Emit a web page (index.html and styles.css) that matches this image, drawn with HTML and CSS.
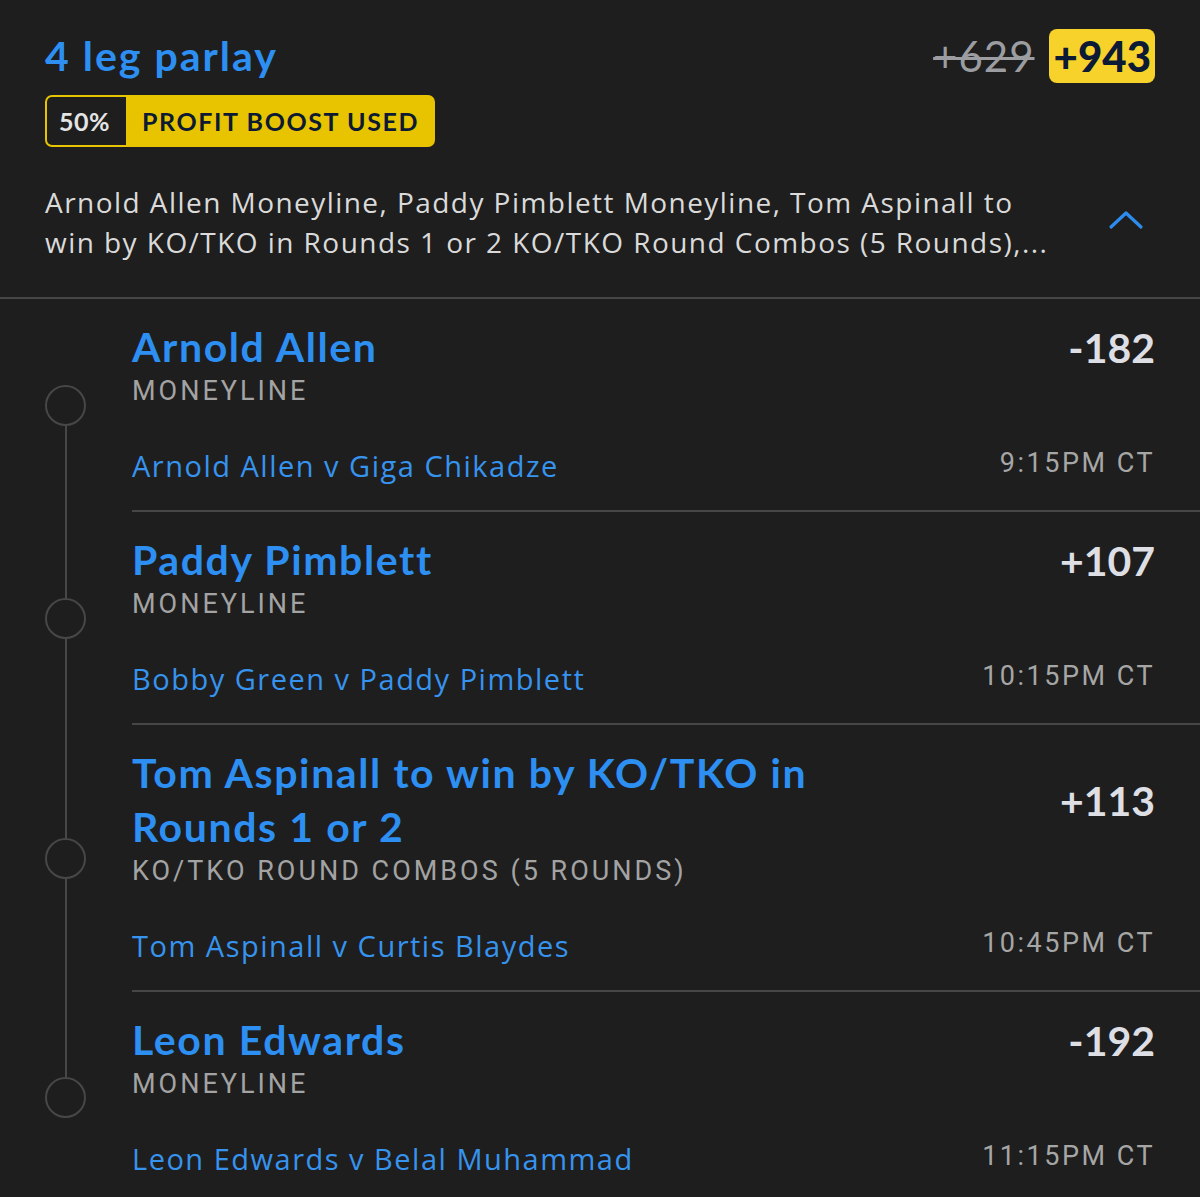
FILE: index.html
```html
<!DOCTYPE html>
<html lang="en">
<head>
<meta charset="utf-8">
<title>4 leg parlay</title>
<link rel="stylesheet" href="styles.css">
</head>
<body>
<div class="slip">
  <section class="header">
    <div class="title-row">
      <h1 class="parlay-title">4 leg parlay</h1>
      <div class="odds-group">
        <span class="odds-old">+629</span>
        <span class="odds-new">+943</span>
      </div>
    </div>
    <div class="boost">
      <span class="boost-pct">50%</span>
      <span class="boost-label">PROFIT BOOST USED</span>
    </div>
    <div class="desc-row">
      <p class="desc">Arnold Allen Moneyline, Paddy Pimblett Moneyline, Tom Aspinall to<br>win by KO/TKO in Rounds 1 or 2 KO/TKO Round Combos (5 Rounds),...</p>
      <svg class="chevron" width="36" height="20" viewBox="0 0 36 20"><polyline points="3,17 18,3 33,17" fill="none" stroke="#2d8cf0" stroke-width="3.2" stroke-linecap="round" stroke-linejoin="round"/></svg>
    </div>
  </section>

  <section class="legs">
    <div class="leg first">
      <div class="rail"><span class="seg"></span><span class="dot"></span><span class="seg"></span></div>
      <div class="leg-body">
        <div class="leg-head">
          <div class="leg-name">Arnold Allen</div>
          <div class="leg-odds">-182</div>
        </div>
        <div class="leg-market">MONEYLINE</div>
        <div class="leg-bottom">
          <span class="event">Arnold Allen v Giga Chikadze</span>
          <span class="time">9:15PM CT</span>
        </div>
      </div>
    </div>

    <div class="leg">
      <div class="rail"><span class="seg"></span><span class="dot"></span><span class="seg"></span></div>
      <div class="leg-body">
        <div class="leg-head">
          <div class="leg-name">Paddy Pimblett</div>
          <div class="leg-odds">+107</div>
        </div>
        <div class="leg-market">MONEYLINE</div>
        <div class="leg-bottom">
          <span class="event">Bobby Green v Paddy Pimblett</span>
          <span class="time">10:15PM CT</span>
        </div>
      </div>
    </div>

    <div class="leg">
      <div class="rail"><span class="seg"></span><span class="dot"></span><span class="seg"></span></div>
      <div class="leg-body">
        <div class="leg-head">
          <div class="leg-name">Tom Aspinall to win by KO/TKO in Rounds 1 or 2</div>
          <div class="leg-odds">+113</div>
        </div>
        <div class="leg-market">KO/TKO ROUND COMBOS (5 ROUNDS)</div>
        <div class="leg-bottom">
          <span class="event">Tom Aspinall v Curtis Blaydes</span>
          <span class="time">10:45PM CT</span>
        </div>
      </div>
    </div>

    <div class="leg last">
      <div class="rail"><span class="seg"></span><span class="dot"></span><span class="seg"></span></div>
      <div class="leg-body">
        <div class="leg-head">
          <div class="leg-name">Leon Edwards</div>
          <div class="leg-odds">-192</div>
        </div>
        <div class="leg-market">MONEYLINE</div>
        <div class="leg-bottom">
          <span class="event">Leon Edwards v Belal Muhammad</span>
          <span class="time">11:15PM CT</span>
        </div>
      </div>
    </div>
  </section>
</div>
</body>
</html>
```

FILE: styles.css
```css
* { box-sizing: border-box; }
html, body {
  margin: 0;
  padding: 0;
  background: #1e1e1e;
}
body {
  font-family: "Lato", "Open Sans", sans-serif;
  color: #d9d9d9;
  width: 1200px;
  height: 1197px;
  overflow: hidden;
}

.header {
  padding: 29px 45px 0 45px;
  border-bottom: 2px solid #464646;
  height: 299px;
}
.title-row {
  display: flex;
  justify-content: space-between;
  align-items: center;
  height: 54px;
}
.parlay-title {
  margin: 0;
  font-size: 41px;
  font-weight: 700;
  letter-spacing: 2px;
  color: #2d8ff2;
  line-height: 54px;
}
.odds-group {
  display: flex;
  align-items: center;
  gap: 14px;
}
.odds-old {
  font-size: 42px;
  font-weight: 400;
  letter-spacing: 1px;
  color: #9b9da1;
  text-decoration: line-through;
  text-decoration-thickness: 3px;
}
.odds-new {
  background: #f7d22a;
  color: #0c1a36;
  font-size: 42px;
  font-weight: 900;
  line-height: 54px;
  height: 54px;
  padding: 0 4px 0 5px;
  border-radius: 8px;
}

.boost {
  display: inline-flex;
  align-items: stretch;
  margin-top: 12px;
  height: 52px;
  border: 2px solid #e7c300;
  border-radius: 7px;
  background: #e7c300;
  overflow: hidden;
}
.boost-pct {
  display: flex;
  align-items: center;
  background: #1e1e1e;
  color: #e4e4e4;
  font-weight: 700;
  font-size: 25px;
  letter-spacing: 0.5px;
  padding: 0 12px 0 12px;
  width: 79px;
}
.boost-label {
  display: flex;
  align-items: center;
  color: #0d1a33;
  font-weight: 700;
  font-size: 25px;
  letter-spacing: 1.6px;
  padding: 0 14px 0 16px;
}

.desc-row {
  display: flex;
  align-items: center;
  justify-content: space-between;
  margin-top: 35px;
}
.desc {
  margin: 0;
  font-family: "Open Sans", "Lato", sans-serif;
  font-size: 28px;
  line-height: 40px;
  letter-spacing: 1.45px;
  color: #dadada;
  white-space: nowrap;
}
.chevron {
  margin-right: 11px;
  margin-top: -4px;
}

.legs {
  display: flex;
  flex-direction: column;
}
.leg {
  display: flex;
}
.rail {
  width: 132px;
  flex: none;
  display: flex;
  flex-direction: column;
  align-items: center;
  padding-right: 1px;
}
.seg {
  flex: 1;
  width: 2px;
  background: #474747;
}
.leg.first .seg:first-child,
.leg.last .seg:last-child {
  background: transparent;
}
.dot {
  width: 41px;
  height: 41px;
  border: 2.5px solid #474747;
  border-radius: 50%;
  flex: none;
}
.leg-body {
  flex: 1;
  padding: 21px 45px 24px 0;
  border-bottom: 2px solid #474747;
}
.leg.last .leg-body {
  border-bottom: none;
}
.leg-head {
  display: flex;
  justify-content: space-between;
  align-items: center;
}
.leg-name {
  font-size: 41px;
  font-weight: 700;
  letter-spacing: 1.6px;
  line-height: 54px;
  color: #2d8ff2;
  max-width: 720px;
}
.leg-odds {
  font-size: 41px;
  font-weight: 700;
  color: #dedfe4;
}
.leg-market {
  font-family: "Roboto", "Lato", sans-serif;
  font-size: 27px;
  line-height: 34px;
  letter-spacing: 3px;
  color: #a3a3a3;
}
.leg-bottom {
  display: flex;
  justify-content: space-between;
  align-items: flex-end;
  margin-top: 35px;
}
.event {
  font-family: "Open Sans", "Lato", sans-serif;
  font-size: 29px;
  line-height: 40px;
  letter-spacing: 1.5px;
  color: #3693ee;
}
.time {
  font-family: "Roboto", "Lato", sans-serif;
  font-size: 27px;
  line-height: 40px;
  letter-spacing: 2.5px;
  color: #a6a6a6;
  padding-bottom: 3px;
}
```
